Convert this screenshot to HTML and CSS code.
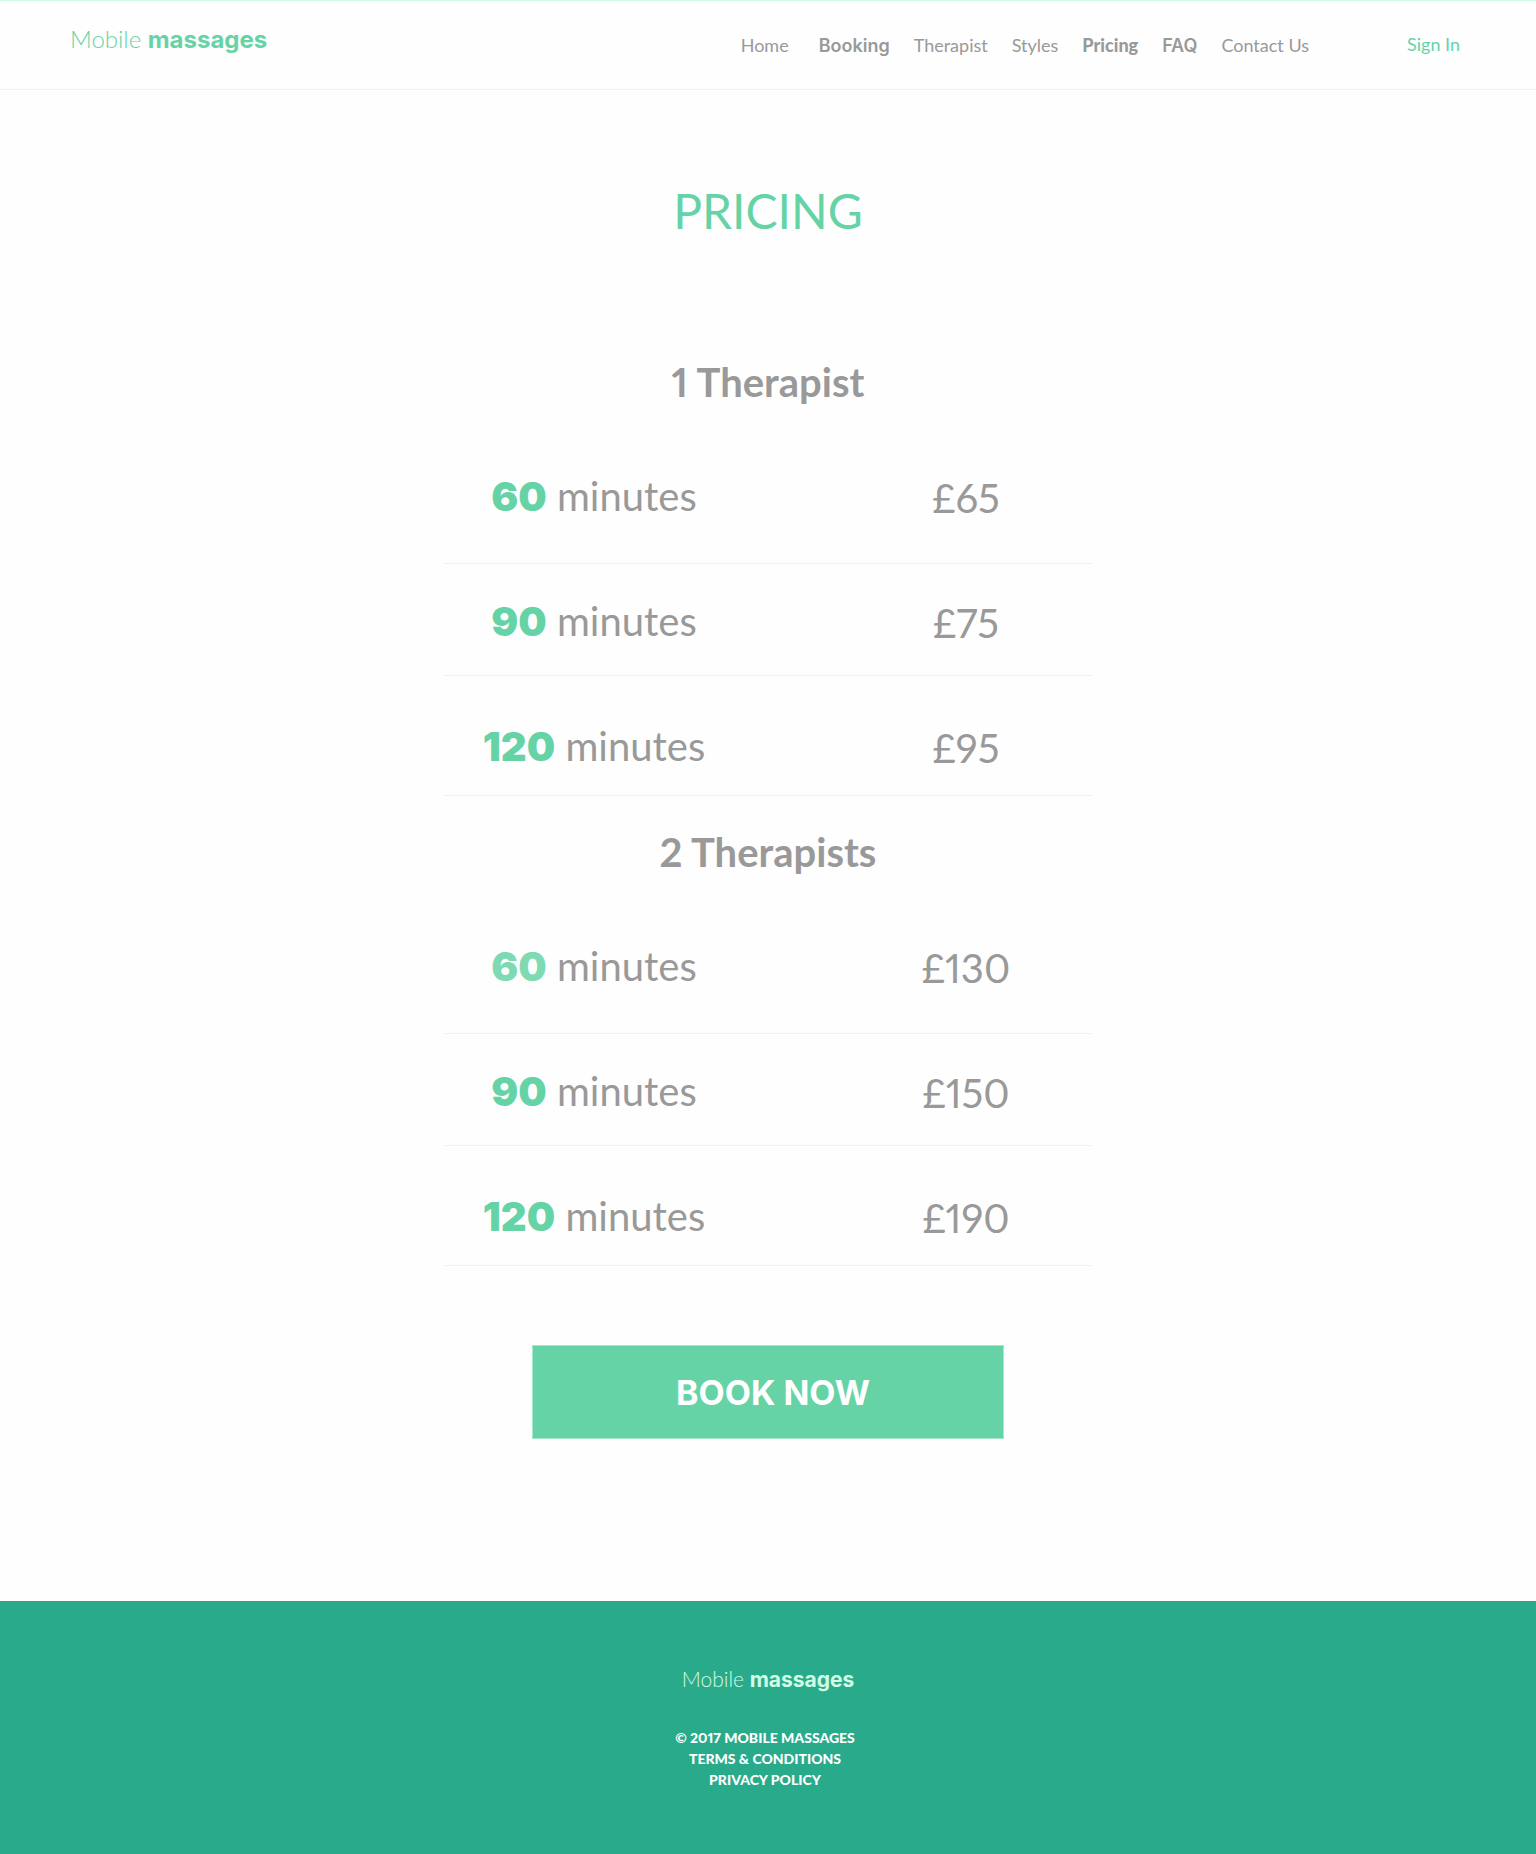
FILE: index.html
```html
<!DOCTYPE html>
<html lang="en">
<head>
<meta charset="utf-8">
<meta name="viewport" content="width=device-width, initial-scale=1">
<title>Pricing - Mobile massages</title>
<link rel="stylesheet" href="styles.css">
</head>
<body>
<header class="site-header">
  <a class="logo" href="#">Mobile <strong>massages</strong></a>
  <nav class="nav" aria-label="Main">
    <a class="nav-home" href="#">Home</a>
    <a class="nav-strong" href="#">Booking</a>
    <a href="#">Therapist</a>
    <a href="#">Styles</a>
    <a class="nav-current" href="#" aria-current="page">Pricing</a>
    <a class="nav-strong" href="#">FAQ</a>
    <a href="#">Contact Us</a>
  </nav>
  <a class="sign-in" href="#">Sign In</a>
</header>

<main class="main">
  <h1 class="title">PRICING</h1>

  <section class="plan">
    <h2 class="plan-title" id="one">1 Therapist</h2>
    <table class="prices" aria-labelledby="one">
      <tbody>
        <tr class="row-short"><th scope="row"><b>60</b> minutes</th><td>£65</td></tr>
        <tr class="row-medium"><th scope="row"><b>90</b> minutes</th><td>£75</td></tr>
        <tr class="row-long"><th scope="row"><b>120</b> minutes</th><td>£95</td></tr>
      </tbody>
    </table>
  </section>

  <section class="plan plan-pair">
    <h2 class="plan-title" id="two">2 Therapists</h2>
    <table class="prices" aria-labelledby="two">
      <tbody>
        <tr class="row-short"><th scope="row"><b>60</b> minutes</th><td>£130</td></tr>
        <tr class="row-medium"><th scope="row"><b>90</b> minutes</th><td>£150</td></tr>
        <tr class="row-long"><th scope="row"><b>120</b> minutes</th><td>£190</td></tr>
      </tbody>
    </table>
  </section>

  <button class="book" type="button">BOOK NOW</button>
</main>

<footer class="site-footer">
  <a class="logo logo-footer" href="#">Mobile <strong>massages</strong></a>
  <div class="legal">
    <p>© 2017 MOBILE MASSAGES</p>
    <a href="#">TERMS &amp; CONDITIONS</a>
    <a href="#">PRIVACY POLICY</a>
  </div>
</footer>
</body>
</html>
```
FILE: styles.css
```css
:root {
  --green: #66d3a6;
  --deep: #29ab8b;
  --grey: #999;
  --line: #dff8f0;
  --text: Lato, "Open Sans", sans-serif;
  --wide: Inter, Lato, sans-serif;
}

* { box-sizing: border-box; }

body {
  margin: 0;
  min-height: 100vh;
  display: flex;
  flex-direction: column;
  background: #fefefe;
  color: var(--grey);
  font-family: var(--text);
  font-variant-numeric: proportional-nums;
}

a { color: inherit; text-decoration: none; }

.site-header {
  display: flex;
  align-items: flex-start;
  padding: 23px 76px 31px 70px;
  border-top: 1px solid #d2fbe6;
  border-bottom: 1px solid var(--line);
}

.logo {
  color: var(--green);
  font-size: 24px;
  line-height: 30px;
  font-weight: 300;
}

.logo strong {
  font-family: var(--wide);
  font-weight: 700;
}

.nav {
  display: flex;
  align-items: baseline;
  gap: 24px;
  margin: 9px 98px 0 auto;
  font-size: 18px;
  line-height: 24px;
}

.nav-home { margin-right: 6px; }

.nav-strong {
  font-family: var(--wide);
  font-weight: 600;
}

.nav-current { font-weight: 900; }

.sign-in {
  margin-top: 8px;
  color: var(--green);
  font-size: 18px;
  line-height: 24px;
}

.main {
  display: flex;
  flex-direction: column;
  align-items: center;
  flex: 1;
  padding: 92px 24px 162px;
}

.title {
  margin: 0;
  color: var(--green);
  font-size: 48px;
  line-height: 58px;
  font-weight: 400;
}

.plan {
  width: 100%;
  max-width: 648px;
  margin-top: 118px;
}

.plan-pair { margin-top: 32px; }

.plan-title {
  margin: 0 0 66px;
  font-size: 40px;
  line-height: 48px;
  font-weight: 700;
  text-align: center;
}

.prices {
  width: 100%;
  border-collapse: separate;
  border-spacing: 0;
  font-size: 40px;
}

.prices th,
.prices td {
  padding: 0;
  border-bottom: 1px solid var(--line);
  vertical-align: top;
  text-align: center;
  font-weight: 400;
}

.prices th {
  width: 300px;
  line-height: 48px;
}

.prices td {
  padding-left: 96px;
  line-height: 52px;
}

.prices b {
  color: var(--green);
  font-family: var(--wide);
  font-weight: 900;
  line-height: 40px;
}

.plan-pair .row-short b { color: #7edab3; }

.row-short > * { height: 92px; }
.prices .row-medium > * { height: 112px; padding-top: 33px; }
.prices .row-long > * { height: 120px; padding-top: 46px; }

.book {
  width: 100%;
  max-width: 472px;
  height: 94px;
  margin-top: 79px;
  padding: 0 0 0 10px;
  border: 1px solid #a5e5cb;
  background: var(--green);
  color: #fff;
  font-family: var(--wide);
  font-size: 34px;
  font-weight: 700;
}

.site-footer {
  display: flex;
  flex-direction: column;
  align-items: center;
  padding: 63px 24px 66px;
  background: var(--deep);
  color: #fff;
}

.logo-footer {
  color: #d2fbe6;
  font-size: 21px;
}

.legal {
  display: flex;
  flex-direction: column;
  margin-top: 32px;
  padding-right: 6px;
  font-size: 14px;
  line-height: 21px;
  font-weight: 900;
  text-align: center;
}

.legal p { margin: 0; }
```
